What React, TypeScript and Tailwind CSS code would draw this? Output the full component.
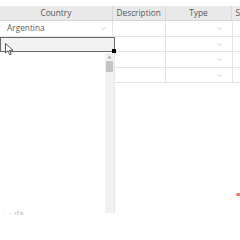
import React from 'react';

const font = { fontFamily: '"Open Sans", "Noto Sans", sans-serif' };

const Arrow = () => (
  <svg width="5" height="3" viewBox="0 0 5 3" className="shrink-0">
    <path d="M0.5 0.5 L2.5 2.5 L4.5 0.5" fill="none" stroke="#b8b8b8" strokeWidth="0.8" />
  </svg>
);

const rowHeights = ['h-[16px]', 'h-[15px]', 'h-[16px]', 'h-[15px]'];

export default function App() {
  return (
    <div className="relative w-[240px] h-[240px] overflow-hidden bg-white text-[8.3px] text-[#5e5e5e]" style={font}>
      <div className="h-[6px]" />
      {/* header */}
      <div className="flex h-[15px] bg-[#e9e9e9] border-b border-[#d6d6d6] text-[#555]">
        <div className="w-[113px] flex items-center justify-center border-r border-[#d9d9d9]">Country</div>
        <div className="w-[53px] flex items-center justify-center border-r border-[#d9d9d9]">Description</div>
        <div className="w-[67px] flex items-center justify-center border-r border-[#d9d9d9]">Type</div>
        <div className="flex-1 flex items-center pl-[3px]">S</div>
      </div>
      {/* rows */}
      {rowHeights.map((h, i) => (
        <div key={i} className={`flex ${h} border-b border-[#e4e4e4]`}>
          <div className="w-[113px] flex items-center justify-between pl-[7px] pr-[6px] border-r border-[#e4e4e4]">
            <span>{i === 0 ? 'Argentina' : ''}</span>
            {i === 0 && <Arrow />}
          </div>
          <div className="w-[53px] border-r border-[#e4e4e4]" />
          <div className="w-[67px] flex items-center justify-end pr-[10px] border-r border-[#e4e4e4]">
            <Arrow />
          </div>
          <div className="flex-1" />
        </div>
      ))}
      {/* editor in row 2 */}
      <div className="absolute left-0 top-[37px] w-[115px] h-[15px] bg-[#f2f2f2] border border-[#6a6a6a]" />
      <div className="absolute left-[112px] top-[49px] w-[4px] h-[4px] bg-black" />
      {/* dropdown list */}
      <div className="absolute left-0 top-[53px] w-[115px] h-[160px] bg-white border-r border-[#e6e6e6] flex">
        <div className="flex-1" />
        <div className="w-[9px] bg-[#f1f1f1] flex flex-col items-center">
          <svg width="5" height="4" viewBox="0 0 5 4" className="mt-[2px]">
            <path d="M2.5 0.5 L4.5 3.5 L0.5 3.5 Z" fill="#a8a8a8" />
          </svg>
          <div className="mt-[2px] w-[7px] h-[11px] bg-[#c4c4c4]" />
        </div>
      </div>
      {/* cursor */}
      <svg className="absolute left-[5px] top-[43px]" width="9" height="13" viewBox="0 0 9 13">
        <path d="M0.5 0.5 L0.5 10 L3 7.8 L4.8 11.8 L6.3 11.1 L4.5 7.3 L8 7.3 Z" fill="white" stroke="#333" strokeWidth="0.8" />
      </svg>
      {/* bottom fragments */}
      <div className="absolute left-[4px] top-[209px] text-[6px] text-[#999] tracking-[1px]">· · ıfo</div>
      <div className="absolute left-[236px] top-[193px] w-[4px] h-[3px] bg-[#e87a66] rounded-l-full" />
      <div className="absolute left-[229px] top-[197px] w-[3px] h-[3px] bg-[#fbf3d8] rounded-full" />
    </div>
  );
}
